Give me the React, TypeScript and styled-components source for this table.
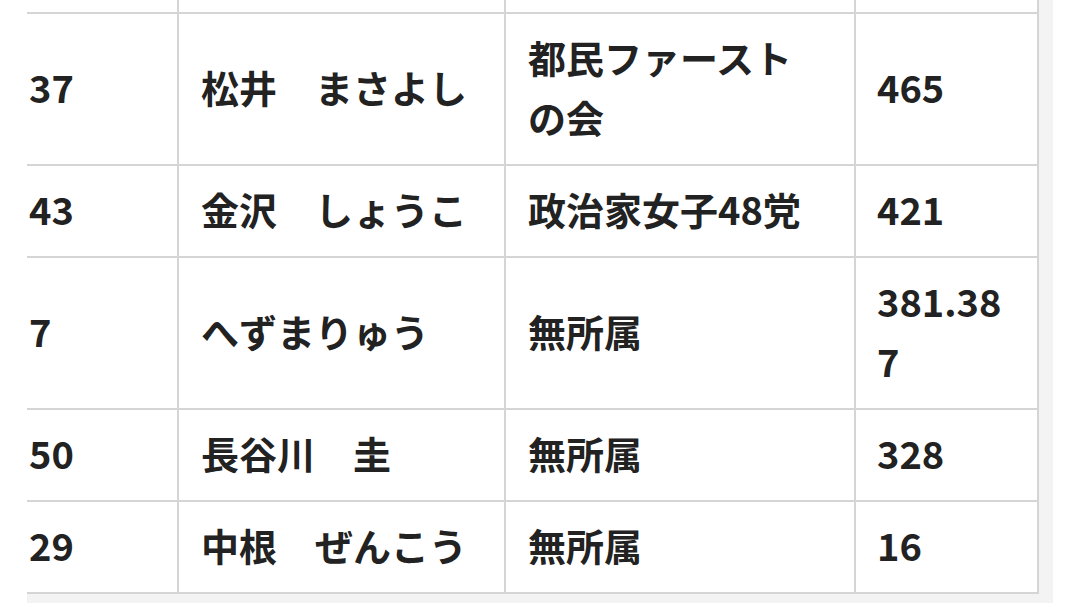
import React from "react";
import styled, { createGlobalStyle } from "styled-components";

interface Row {
  no: string;
  name: string;
  party: string;
  votes: string;
}

const rows: Row[] = [
  { no: "37", name: "松井\u3000まさよし", party: "都民ファーストの会", votes: "465" },
  { no: "43", name: "金沢\u3000しょうこ", party: "政治家女子48党", votes: "421" },
  { no: "7", name: "へずまりゅう", party: "無所属", votes: "381.387" },
  { no: "50", name: "長谷川\u3000圭", party: "無所属", votes: "328" },
  { no: "29", name: "中根\u3000ぜんこう", party: "無所属", votes: "16" },
];

const App: React.FC = () => {
  return (
    <>
      <GlobalStyle />
      <Page>
        <ScrollBox>
          <Table>
            <colgroup>
              <col style={{ width: 151 }} />
              <col style={{ width: 327 }} />
              <col style={{ width: 350 }} />
              <col style={{ width: 183 }} />
            </colgroup>
            <tbody>
              <CutRow>
                <td />
                <td />
                <td />
                <td />
              </CutRow>
              {rows.map((r) => (
                <tr key={r.no}>
                  <Cell $first>{r.no}</Cell>
                  <Cell>{r.name}</Cell>
                  <Cell>{r.party}</Cell>
                  <Cell $narrow>{r.votes}</Cell>
                </tr>
              ))}
            </tbody>
          </Table>
        </ScrollBox>
      </Page>
    </>
  );
};

export default App;

// --- Styled Components ---
const GlobalStyle = createGlobalStyle`
  html, body {
    margin: 0;
    padding: 0;
    background: #ffffff;
  }
  body {
    font-family: "Noto Sans CJK JP", "Noto Sans", sans-serif;
    color: #222222;
    overflow: hidden;
  }
`;

const Page = styled.div`
  width: 1080px;
  height: 603px;
  padding-left: 27px;
  box-sizing: border-box;
  background: #ffffff;
`;

const ScrollBox = styled.div`
  width: 1026px;
  background: #f3f3f3;
  padding: 0 14px 13px 0;
  box-sizing: border-box;
`;

const Table = styled.table`
  width: 1012px;
  table-layout: fixed;
  border-collapse: collapse;
  background: #ffffff;
`;

const CutRow = styled.tr`
  td {
    height: 12px;
    padding: 0;
    border-left: 2px solid #d5d5d5;
    border-bottom: 2px solid #d5d5d5;
  }
  td:first-child {
    border-left: none;
  }
  td:last-child {
    border-right: 2px solid #d5d5d5;
  }
`;

const Cell = styled.td<{ $first?: boolean; $narrow?: boolean }>`
  border: 2px solid #d5d5d5;
  border-left: ${(p) => (p.$first ? "none" : "2px solid #d5d5d5")};
  padding-top: 13px;
  padding-bottom: 17px;
  padding-right: ${(p) => (p.$narrow ? "30px" : "24px")};
  padding-left: ${(p) => (p.$first ? "2px" : p.$narrow ? "21px" : "22px")};
  font-size: 38px;
  font-weight: 700;
  line-height: 60px;
  vertical-align: middle;
  word-break: break-all;
  color: #222222;
`;
